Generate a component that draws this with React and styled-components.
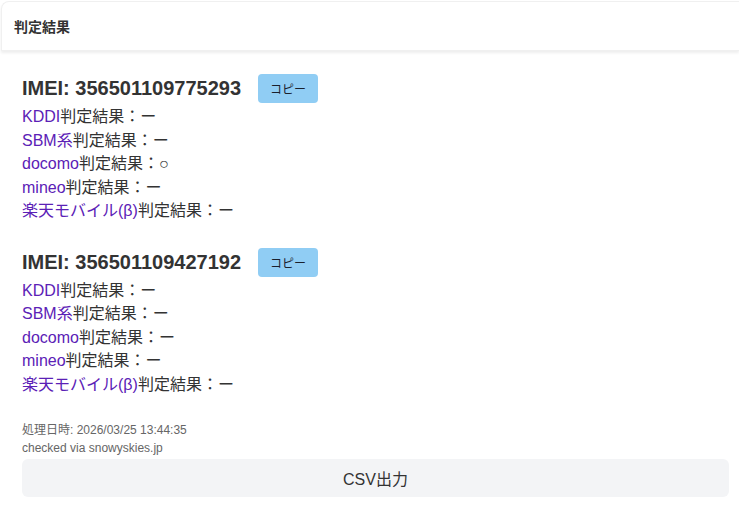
import React from 'react';
import styled, { createGlobalStyle } from 'styled-components';

const GlobalStyle = createGlobalStyle`
    body {
        margin: 0;
        background: #fff;
        font-family: "Liberation Sans", Arial, "Noto Sans CJK JP", sans-serif;
        color: #333;
    }
`;

const results = [
    {
        imei: '356501109775293',
        rows: [
            ['KDDI', 'ー'],
            ['SBM系', 'ー'],
            ['docomo', '○'],
            ['mineo', 'ー'],
            ['楽天モバイル(β)', 'ー'],
        ],
    },
    {
        imei: '356501109427192',
        rows: [
            ['KDDI', 'ー'],
            ['SBM系', 'ー'],
            ['docomo', 'ー'],
            ['mineo', 'ー'],
            ['楽天モバイル(β)', 'ー'],
        ],
    },
];

function App(){
    return (
        <Page>
            <GlobalStyle/>
            <Header>
                <HeaderTitle>判定結果</HeaderTitle>
            </Header>
            <Body>
                {
                    results.map((r) =>
                    <Block key={r.imei}>
                        <ImeiRow>
                            <Imei>IMEI: {r.imei}</Imei>
                            <CopyButton>コピー</CopyButton>
                        </ImeiRow>
                        <Rows>
                            {r.rows.map(([carrier, mark]) =>
                                <Row key={carrier}>
                                    <Carrier>{carrier}</Carrier>判定結果：{mark}
                                </Row>
                            )}
                        </Rows>
                    </Block>)
                }
                <Meta>
                    <div>処理日時: 2026/03/25 13:44:35</div>
                    <div>checked via snowyskies.jp</div>
                </Meta>
                <CsvButton>CSV出力</CsvButton>
            </Body>
        </Page>
    )
}

const Page = styled.div`
    padding: 1px 0 0 1px;
`;

const Header = styled.div`
    height: 48px;
    display: flex;
    align-items: center;
    padding-left: 12px;
    border: 1px solid #f0f0f0;
    border-right: none;
    border-radius: 8px 0 0 0;
    box-shadow: 0 2px 3px rgba(0, 0, 0, 0.07);
`;

const HeaderTitle = styled.h2`
    margin: 0;
    font-size: 14px;
    font-weight: bold;
    color: #333;
`;

const Body = styled.div`
    padding: 23px 10px 0 21px;
    display: flex;
    flex-direction: column;
`;

const Block = styled.div`
    margin-bottom: 25px;
`;

const ImeiRow = styled.div`
    display: flex;
    align-items: center;
    gap: 17px;
    height: 29px;
`;

const Imei = styled.h3`
    margin: 0;
    font-size: 20px;
    font-weight: bold;
    color: #333;
`;

const CopyButton = styled.button`
    width: 60px;
    height: 29px;
    border: none;
    border-radius: 4px;
    background: #90cdf4;
    color: #1a202c;
    font-family: inherit;
    font-size: 12px;
    padding: 0;
`;

const Rows = styled.div`
    margin-top: 2px;
    font-size: 16px;
    line-height: 23.5px;
    color: #333;
`;

const Row = styled.div``;

const Carrier = styled.span`
    color: #5b21b6;
`;

const Meta = styled.div`
    font-size: 12px;
    line-height: 18px;
    color: #666;
`;

const CsvButton = styled.button`
    margin-top: 2px;
    height: 38px;
    border: none;
    border-radius: 6px;
    background: #f3f4f6;
    color: #333;
    font-family: inherit;
    font-size: 16px;
`;

export default App;
